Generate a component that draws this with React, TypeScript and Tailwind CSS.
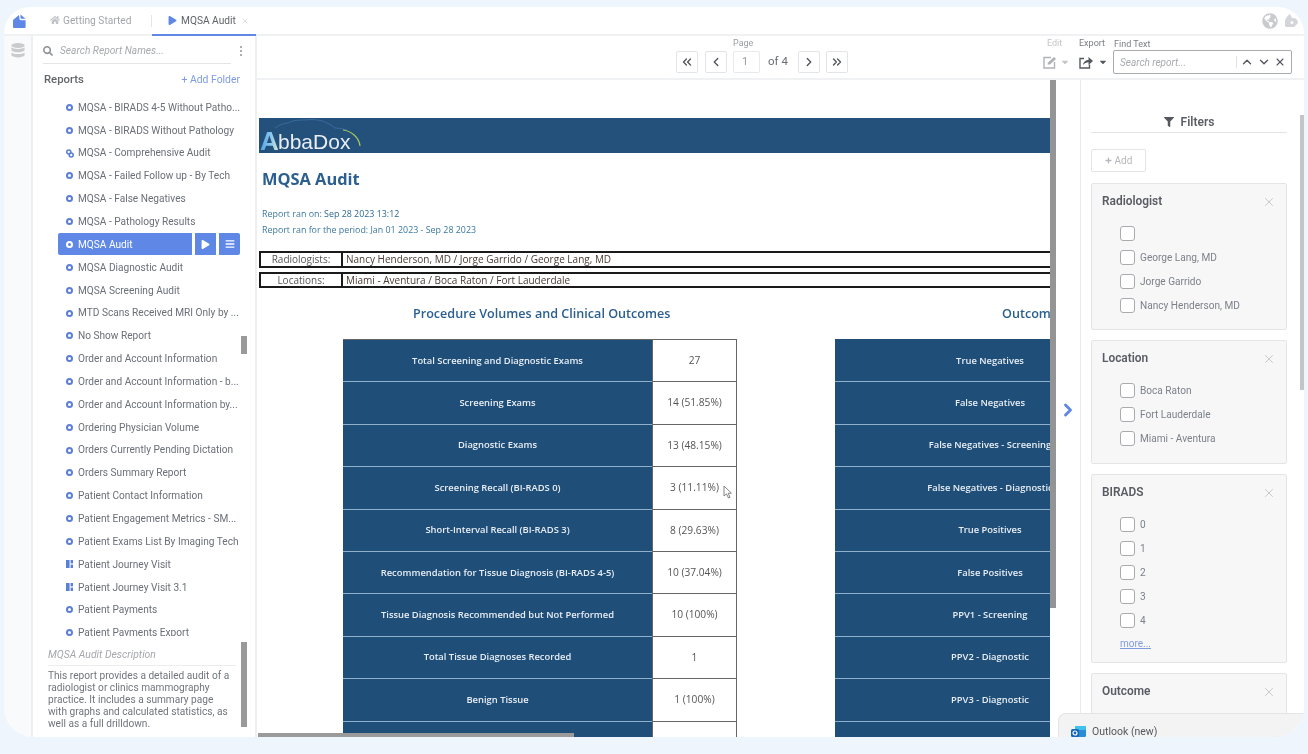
import React from 'react';
import { FaHome, FaPlay, FaBars, FaFilter, FaSearch, FaGlobeAmericas, FaPlus, FaCaretDown } from 'react-icons/fa';
import { ChevronLeft, ChevronRight, ChevronsLeft, ChevronsRight, ChevronUp, ChevronDown, X } from 'lucide-react';

const reports: [string, string][] = [
  ['MQSA - BIRADS 4-5 Without Patho...', 'o'],
  ['MQSA - BIRADS Without Pathology', 'o'],
  ['MQSA - Comprehensive Audit', 'l'],
  ['MQSA - Failed Follow up - By Tech', 'o'],
  ['MQSA - False Negatives', 'o'],
  ['MQSA - Pathology Results', 'o'],
  ['MQSA Audit', 'a'],
  ['MQSA Diagnostic Audit', 'o'],
  ['MQSA Screening Audit', 'o'],
  ['MTD Scans Received MRI Only by ...', 'o'],
  ['No Show Report', 'o'],
  ['Order and Account Information', 'o'],
  ['Order and Account Information - b...', 'o'],
  ['Order and Account Information by...', 'o'],
  ['Ordering Physician Volume', 'o'],
  ['Orders Currently Pending Dictation', 'o'],
  ['Orders Summary Report', 'o'],
  ['Patient Contact Information', 'o'],
  ['Patient Engagement Metrics - SM...', 'o'],
  ['Patient Exams List By Imaging Tech', 'o'],
  ['Patient Journey Visit', 'd'],
  ['Patient Journey Visit 3.1', 'd'],
  ['Patient Payments', 'o'],
  ['Patient Payments Export', 'o'],
];

const leftRows: [string, string][] = [
  ['Total Screening and Diagnostic Exams', '27'],
  ['Screening Exams', '14 (51.85%)'],
  ['Diagnostic Exams', '13 (48.15%)'],
  ['Screening Recall (BI-RADS 0)', '3 (11.11%)'],
  ['Short-Interval Recall (BI-RADS 3)', '8 (29.63%)'],
  ['Recommendation for Tissue Diagnosis (BI-RADS 4-5)', '10 (37.04%)'],
  ['Tissue Diagnosis Recommended but Not Performed', '10 (100%)'],
  ['Total Tissue Diagnoses Recorded', '1'],
  ['Benign Tissue', '1 (100%)'],
  ['', ''],
];
const rightRows = ['True Negatives', 'False Negatives', 'False Negatives - Screening', 'False Negatives - Diagnostic', 'True Positives', 'False Positives', 'PPV1 - Screening', 'PPV2 - Diagnostic', 'PPV3 - Diagnostic', ''];

function RowIcon({ kind }: { kind: string }) {
  if (kind === 'l')
    return (
      <svg width="8" height="9" viewBox="0 0 8 9" className="shrink-0 -mr-[1px]">
        <circle cx="2.8" cy="3" r="2" fill="none" stroke="#5b7fd6" strokeWidth="1.6" />
        <circle cx="5.2" cy="6" r="2" fill="none" stroke="#5b7fd6" strokeWidth="1.6" />
      </svg>
    );
  if (kind === 'd')
    return (
      <svg width="7" height="8" viewBox="0 0 7 8" className="shrink-0">
        <rect x="0" y="0" width="3.6" height="8" fill="#5b7fd6" />
        <rect x="4.6" y="0" width="2.4" height="3.4" fill="#5b7fd6" />
        <rect x="4.6" y="4.6" width="2.4" height="3.4" fill="#5b7fd6" />
      </svg>
    );
  return <span className="w-[7px] h-[7px] rounded-full border-2 border-[#5b7fd6] shrink-0" />;
}

function ReportRow({ name, kind }: { name: string; kind: string }) {
  if (kind === 'a') {
    return (
      <div className="h-[22.85px] flex items-center gap-[3px] pl-[25px] pr-[15px]">
        <div className="flex-1 h-[22px] bg-[#5e87e6] rounded-l-[2px] flex items-center gap-[5px] pl-[8px] text-white">
          <span className="w-[7px] h-[7px] rounded-full border-2 border-white shrink-0" />
          <span>{name}</span>
        </div>
        <div className="w-[21px] h-[22px] bg-[#5e87e6] flex items-center justify-center text-white">
          <FaPlay size={9} />
        </div>
        <div className="w-[21px] h-[22px] bg-[#5e87e6] rounded-r-[2px] flex items-center justify-center text-white">
          <FaBars size={10} />
        </div>
      </div>
    );
  }
  return (
    <div className="h-[22.85px] flex items-center gap-[5px] pl-[33px] text-[#6a6f78] whitespace-nowrap">
      <RowIcon kind={kind} />
      <span>{name}</span>
    </div>
  );
}

function Check({ label }: { label?: string }) {
  return (
    <div className="h-[24.2px] flex items-center gap-[5px] pl-[28px] text-[#7d8289] text-[10.1px]">
      <span className="w-[15px] h-[15px] rounded-[3px] border border-[#a9abae] bg-white shrink-0" />
      <span>{label}</span>
    </div>
  );
}

function FilterCard({ title, items, more, h }: { title: string; items: string[]; more?: boolean; h: string }) {
  return (
    <div className={`${h} shrink-0 bg-[#f7f7f8] border border-[#e3e4e6] rounded-[2px] mb-[10px] overflow-hidden`}>
      <div className="flex items-center justify-between h-[37px] pl-[10px] pr-[10px] pb-[1px]">
        <span className="text-[11.9px] font-semibold text-[#595c63]">{title}</span>
        <X size={14} strokeWidth={1.2} className="text-[#b4b6ba]" />
      </div>
      {items.map((i) => (
        <Check key={i + title} label={i} />
      ))}
      {more && <div className="pl-[28px] text-[10px] text-[#7f9be0] underline mt-[3px]">more...</div>}
    </div>
  );
}

function PagerBtn({ children, className }: { children: React.ReactNode; className?: string }) {
  return (
    <span className={`w-[22px] h-[22px] rounded-[2px] border border-[#e3e4e6] bg-white flex items-center justify-center text-[#55585e] ${className ?? ''}`}>
      {children}
    </span>
  );
}

export default function App() {
  return (
    <div className="w-[1308px] h-[754px] bg-[#eff5fd] pt-[7px] px-[4px] pb-[17px] overflow-hidden blur-[0.4px] font-['Roboto',sans-serif]">
      <div className="relative w-[1300px] h-[730px] bg-white rounded-t-[26px] rounded-b-[30px] overflow-hidden flex flex-col">
        {/* tabs */}
        <div className="h-[29px] shrink-0 flex items-center text-[10.2px] border-b-2 border-[#f0f1f3] relative">
          <div className="w-[33px] pl-[9px] shrink-0 flex">
            <svg width="13" height="14" viewBox="0 0 13 14">
              <path d="M0 6 L6 1 L6.5 5 Q6.5 6.3 8 6.3 L12.6 6.3 V13 Q12.6 14 11.6 14 H1 Q0 14 0 13 Z" fill="#5e87e6" />
              <path d="M7.5 0.5 L12.5 4.8 H8.5 Q7.5 4.8 7.5 3.8 Z" fill="#5e87e6" />
            </svg>
          </div>
          <div className="w-[114px] flex items-center gap-[3px] pl-[13px] text-[#a3a6ab] shrink-0">
            <FaHome size={10} className="text-[#c2c4c8]" />
            <span>Getting Started</span>
          </div>
          <div className="w-px h-[12px] bg-[#e4e5e7]" />
          <div className="w-[104px] h-[29px] flex items-center gap-[4px] pl-[16px] text-[#5f6369] border-b-2 border-[#5e87e6] -mb-[2px]">
            <FaPlay size={9} className="text-[#5e87e6]" />
            <span>MQSA Audit</span>
            <X size={8} className="text-[#cfd1d4] ml-[1px]" />
          </div>
          <div className="flex-1" />
          <FaGlobeAmericas size={16} className="text-[#c9cbcf] mr-[7px]" />
          <svg width="13" height="13" viewBox="0 0 13 13" className="mr-[6px]">
            <path d="M5 0 C1 3 0 6 0 8 A5 5 0 0 0 10 12 L13 9 A5 5 0 0 0 7 4 Z" fill="#d3d5d8" />
            <circle cx="7" cy="8.5" r="1.5" fill="#fff" />
          </svg>
        </div>

        {/* body */}
        <div className="flex-1 min-h-0 flex">
          {/* rail */}
          <div className="w-[29px] shrink-0 bg-[#f9fafb] border-r-2 border-[#eeeff1] flex justify-center pt-[7px] pl-[1px]">
            <svg width="14" height="15" viewBox="0 0 14 16">
              <ellipse cx="7" cy="2.6" rx="7" ry="2.6" fill="#c9cbce" />
              <path d="M0 4.6 C2 7 12 7 14 4.6 V8 C12 10.6 2 10.6 0 8 Z" fill="#c9cbce" />
              <path d="M0 10 C2 12.4 12 12.4 14 10 V13.4 C12 16 2 16 0 13.4 Z" fill="#c9cbce" />
            </svg>
          </div>

          {/* sidebar */}
          <div className="w-[224px] shrink-0 border-r-2 border-[#eeeff1] flex flex-col relative">
            <div className="h-[28px] ml-[10px] w-[188px] border-b border-[#e3e4e6] flex items-center gap-[7px] shrink-0 pt-[2px]">
              <FaSearch size={10} className="text-[#8e9196]" />
              <span className="text-[10.2px] italic text-[#a6a9ad]">Search Report Names...</span>
            </div>
            <span className="absolute left-[207px] top-[10px] flex flex-col gap-[2px]">
              <span className="w-[2px] h-[2px] rounded-full bg-[#8e9196]" />
              <span className="w-[2px] h-[2px] rounded-full bg-[#8e9196]" />
              <span className="w-[2px] h-[2px] rounded-full bg-[#8e9196]" />
            </span>
            <div className="h-[24px] shrink-0 flex items-center justify-between pl-[11px] pr-[15px] pt-[8px]">
              <span className="text-[11.3px] font-medium text-[#62666d]">Reports</span>
              <span className="text-[10.4px] text-[#7f9be0]">+ Add Folder</span>
            </div>
            <div className="h-[548px] shrink-0 overflow-hidden text-[10.15px] pt-[8px]">
              {reports.map(([n, k]) => (
                <ReportRow key={n} name={n} kind={k} />
              ))}
            </div>
            <div className="absolute left-[208px] top-[300px] w-[6px] h-[18px] bg-[#9a9a9a]" />
            <div className="absolute left-[208px] top-[606px] w-[6px] h-[85px] bg-[#9a9a9a]" />
            <div className="ml-[15px] w-[188px] mt-[11px]">
              <div className="text-[10.4px] italic text-[#a5a7ab] pb-[2px] border-b border-[#eceded]">MQSA Audit Description</div>
              <p className="text-[10.15px] leading-[12.2px] text-[#70757d] mt-[4px] w-[184px]">
                This report provides a detailed audit of a radiologist or clinics mammography practice. It includes a summary page with graphs and calculated statistics, as well as a full drilldown.
              </p>
            </div>
          </div>

          {/* main */}
          <div className="flex-1 min-w-0 flex flex-col">
            {/* toolbar */}
            <div className="h-[44px] shrink-0 border-b-2 border-[#f0f1f3] flex items-end pb-[4px]">
              <div className="w-[770px] h-[24px] shrink-0 flex items-center pl-[419px]">
                <PagerBtn><ChevronsLeft size={14} strokeWidth={2.4} /></PagerBtn>
                <PagerBtn className="ml-[7px]"><ChevronLeft size={14} strokeWidth={2.4} /></PagerBtn>
                <div className="relative ml-[6px]">
                  <span className="absolute -top-[13px] left-0 text-[9px] leading-[11px] text-[#9a9da1]">Page</span>
                  <span className="w-[27px] h-[22px] rounded-[2px] border border-[#e8e9ea] flex items-center pl-[8px] text-[11px] text-[#9a9da1]">1</span>
                </div>
                <span className="text-[11.5px] text-[#6a6d72] ml-[8px] mr-[9px] w-[21px] whitespace-nowrap">of 4</span>
                <PagerBtn><ChevronRight size={14} strokeWidth={2.4} /></PagerBtn>
                <PagerBtn className="ml-[6px]"><ChevronsRight size={14} strokeWidth={2.4} /></PagerBtn>
              </div>
              <div className="relative h-[24px] flex items-center ml-[16px] w-[36px] shrink-0">
                <span className="absolute -top-[12px] left-[4px] text-[9px] leading-[11px] text-[#c3c5c8]">Edit</span>
                <svg width="14" height="13" viewBox="0 0 14 13" fill="none" stroke="#b0b2b6" strokeWidth="1.4">
                  <path d="M8 1.5 H1 V12 H11.5 V6" />
                  <path d="M4.5 8.5 L5 6.5 L11 1 L13 3 L7 8.5 Z" fill="#b0b2b6" stroke="none" />
                </svg>
                <FaCaretDown size={10} className="text-[#c0c2c5] ml-[3px]" />
              </div>
              <div className="relative h-[24px] flex items-center w-[34px] shrink-0">
                <span className="absolute -top-[12px] left-0 text-[9px] leading-[11px] text-[#7a7d82]">Export</span>
                <svg width="14" height="13" viewBox="0 0 14 13" fill="none" stroke="#55585e" strokeWidth="1.4">
                  <path d="M5 2.5 H1 V12 H10.5 V8.5" />
                  <path d="M4 9 C4.5 5.5 7 4 9.5 4 V1 L14 5 L9.5 9 V6.2 C7.5 6.2 5.5 7 4 9 Z" fill="#55585e" stroke="none" />
                </svg>
                <FaCaretDown size={10} className="text-[#55585e] ml-[5px]" />
              </div>
              <div className="relative w-[179px] h-[24px] shrink-0 border border-[#a9abae] rounded-[2px] flex items-center pl-[6px] pr-[5px]">
                <span className="absolute -top-[12px] left-0 text-[9px] leading-[11px] text-[#7a7d82]">Find Text</span>
                <span className="flex-1 text-[10px] italic text-[#a6a9ad]">Search report...</span>
                <span className="w-px h-[12px] bg-[#e0e1e3] mr-[3px]" />
                <ChevronUp size={14} strokeWidth={2.4} className="text-[#55585e]" />
                <ChevronDown size={14} strokeWidth={2.4} className="text-[#55585e] ml-[3px]" />
                <X size={12} strokeWidth={2.2} className="text-[#55585e] ml-[3px]" />
              </div>
            </div>

            <div className="flex-1 min-h-0 flex">
              {/* report */}
              <div className="w-[793px] shrink-0 overflow-hidden relative font-['Open_Sans',sans-serif]">
                <div className="h-[35px] mt-[38px] ml-[2px] bg-[#24507c]">
                  <svg width="110" height="35" viewBox="0 0 110 35">
                    <defs>
                      <linearGradient id="logoA" x1="0" y1="0" x2="1" y2="0">
                        <stop offset="0" stopColor="#4fa3e0" />
                        <stop offset="0.6" stopColor="#8cc8ee" />
                        <stop offset="1" stopColor="#e0ecc8" />
                      </linearGradient>
                    </defs>
                    <path d="M16 10 C20 7 25 5 29 5 C34 2 40 2 46 2 C54 1 62 2 66 4 C70 6 74 8 76 10 C80 10 84 11 88 12" fill="none" stroke="#3a6c9e" strokeWidth="1" />
                    <path d="M84 12 C92 13 100 19 101 28" fill="none" stroke="#a8cc58" strokeWidth="1.2" />
                    <text x="1" y="32" fontFamily="Liberation Sans, sans-serif" fontSize="26" fontWeight="700" fill="url(#logoA)">A</text>
                    <text x="19" y="31" fontFamily="Liberation Sans, sans-serif" fontSize="21" fill="#e8eef4">bbaDox</text>
                  </svg>
                </div>
                <div className="ml-[5px] mt-[14px] text-[16.4px] font-bold text-[#2a5f8f] leading-[24px]">MQSA Audit</div>
                <div className="ml-[5px] mt-[15px] text-[8.9px] leading-[16px] text-[#3b78a0]">
                  <div>Report ran on: <span className="text-[#2c6a94]">Sep 28 2023 13:12</span></div>
                  <div>Report ran for the period: Jan 01 2023 - Sep 28 2023</div>
                </div>
                <div className="ml-[2px] mt-[13px] h-[17px] border-2 border-[#1a1a1a] border-r-0 flex text-[10px] text-[#4a3a33] leading-[13px]">
                  <div className="w-[82px] text-center border-r-2 border-[#1a1a1a] text-[#555]">Radiologists:</div>
                  <div className="pl-[3px]">Nancy Henderson, MD / Jorge Garrido / George Lang, MD</div>
                </div>
                <div className="ml-[2px] mt-[4px] h-[16px] border-2 border-[#1a1a1a] border-r-0 flex text-[10px] text-[#4a3a33] leading-[12px]">
                  <div className="w-[82px] text-center border-r-2 border-[#1a1a1a] text-[#555]">Locations:</div>
                  <div className="pl-[3px]">Miami - Aventura / Boca Raton / Fort Lauderdale</div>
                </div>
                <div className="flex mt-[17px] text-[12.6px] font-semibold text-[#2a5f8f] h-[18px] leading-[18px] whitespace-nowrap">
                  <div className="ml-[156px] w-[589px] shrink-0">Procedure Volumes and Clinical Outcomes</div>
                  <div className="shrink-0">Outcomes</div>
                </div>
                <div className="flex mt-[16px] ml-[86px]">
                  <div className="w-[394px] shrink-0 border-t border-r border-[#666] h-[420px] overflow-hidden">
                    {leftRows.map(([l, v], i) => (
                      <div key={i} className="flex h-[42.4px] text-[9.4px]">
                        <div className="w-[309px] bg-[#1f4e79] border-b border-[#8fb0cc] flex items-center justify-center text-[#e8eef4] font-semibold">{l}</div>
                        <div className="flex-1 border-l border-b border-[#666] flex items-center justify-center text-[#555] text-[10.2px]">{v}</div>
                      </div>
                    ))}
                  </div>
                  <div className="ml-[98px] w-[310px] shrink-0 h-[420px] overflow-hidden bg-[#1f4e79] pt-[1px]">
                    {rightRows.map((l, i) => (
                      <div key={i} className="h-[42.4px] bg-[#1f4e79] border-b border-[#8fb0cc] text-[9.4px] text-[#e8eef4] font-semibold flex items-center justify-center whitespace-nowrap">{l}</div>
                    ))}
                  </div>
                </div>
                <svg width="9" height="14" viewBox="0 0 9 14" className="absolute left-[466px] top-[405px]">
                  <path d="M1 1 V11 L3.5 8.8 L5.5 13 L7 12.3 L5.2 8.2 H8.4 Z" fill="#fff" stroke="#777" strokeWidth="0.9" />
                </svg>
                <div className="absolute left-[1px] bottom-0 w-[316px] h-[4px] bg-[#9a9a9a]" />
              </div>
              {/* scroll + expander */}
              <div className="w-[6px] shrink-0 flex flex-col"><div className="h-[528px] bg-[#949494]" /></div>
              <div className="w-[25px] shrink-0 border-r border-[#e8e9ea] flex items-center justify-center pt-[3px]">
                <ChevronRight size={20} strokeWidth={3.4} className="text-[#5e87e6]" />
              </div>
              {/* filters */}
              <div className="flex-1 min-w-0 pl-[10px] relative overflow-hidden">
                <div className="w-[196px] h-[22px] mt-[31px] border-b border-[#e3e4e6] flex items-center justify-center gap-[7px] text-[12px] font-semibold text-[#5b5e65]">
                  <FaFilter size={10} className="text-[#55585e]" />
                  <span>Filters</span>
                </div>
                <div className="w-[55px] h-[23px] mt-[16px] border border-[#e3e4e6] rounded-[2px] flex items-center justify-center gap-[3px] text-[10px] text-[#b5b7ba]">
                  <FaPlus size={7} />
                  <span>Add</span>
                </div>
                <div className="w-[196px] mt-[11px] flex flex-col">
                  <FilterCard title="Radiologist" items={['', 'George Lang, MD', 'Jorge Garrido', 'Nancy Henderson, MD']} h="h-[147px]" />
                  <FilterCard title="Location" items={['Boca Raton', 'Fort Lauderdale', 'Miami - Aventura']} h="h-[124px]" />
                  <FilterCard title="BIRADS" items={['0', '1', '2', '3', '4']} more h="h-[189px]" />
                  <FilterCard title="Outcome" items={[]} h="h-[64px]" />
                </div>
                <div className="absolute right-0 top-[35px] w-[4px] h-[275px] bg-[#c4c5c7]" />
              </div>
            </div>
          </div>
        </div>

        {/* Outlook toast */}
        <div className="absolute right-0 bottom-0 w-[246px] h-[24px] bg-[#f3f3f3] border-t border-l border-[#e3e4e6] rounded-tl-[8px] flex items-start pt-[11px] pl-[12px] gap-[6px] text-[10.5px] leading-[13px] text-[#55585e] overflow-hidden">
          <svg width="15" height="13" viewBox="0 0 15 13" className="shrink-0">
            <rect x="4" y="1" width="11" height="11" rx="1.5" fill="#2a8bd6" />
            <rect x="4" y="1" width="11" height="4" rx="1" fill="#45c0ee" />
            <rect x="0" y="4" width="8" height="8" rx="1.5" fill="#1668b8" />
            <circle cx="4" cy="8" r="2" fill="none" stroke="#fff" strokeWidth="1.2" />
          </svg>
          <span>Outlook (new)</span>
        </div>
      </div>
    </div>
  );
}
